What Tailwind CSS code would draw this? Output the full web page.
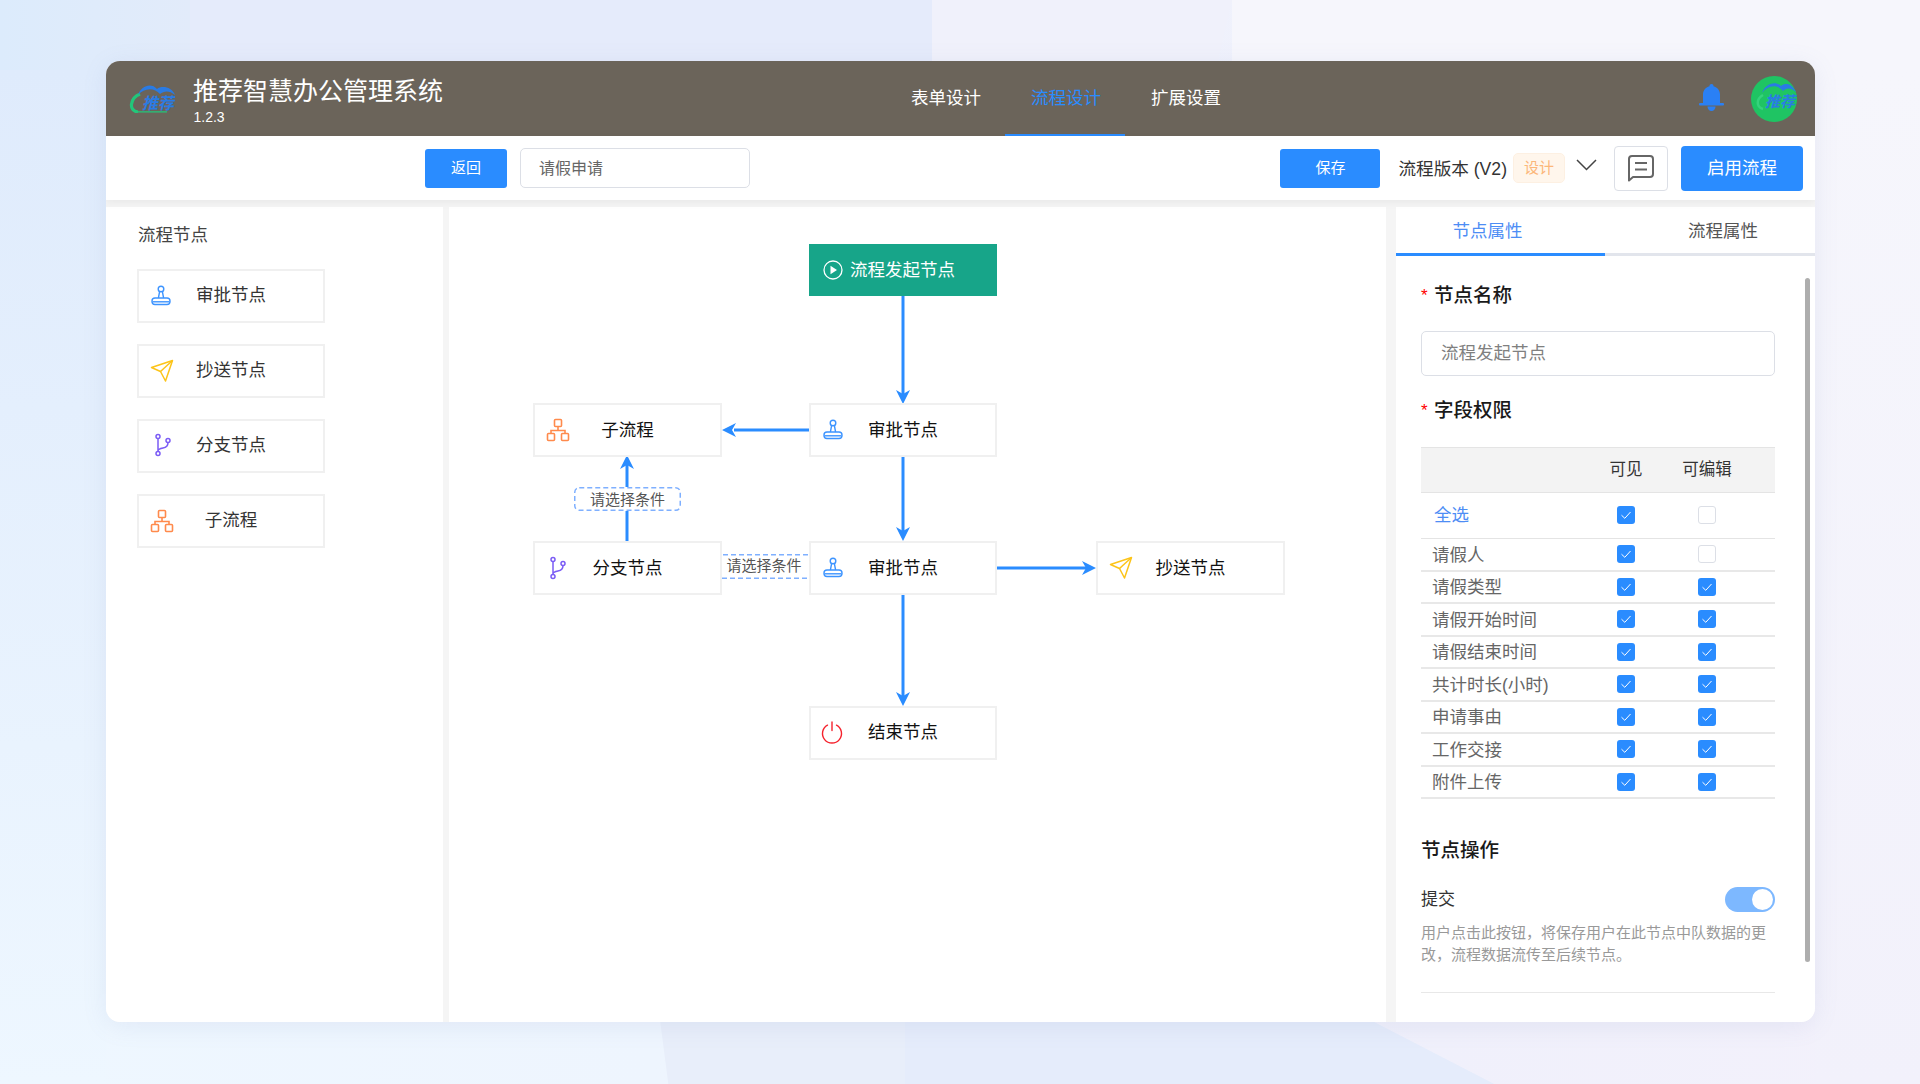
<!DOCTYPE html>
<html lang="zh-CN">
<head>
    <meta charset="UTF-8">
    <title>推荐智慧办公管理系统 - 流程设计</title>
    <meta name="viewport" content="width=device-width, initial-scale=1">
    <script src="https://cdn.jsdelivr.net/npm/@tailwindcss/browser@4"></script>
</head>
<body class="relative w-[1920px] h-[1084px] overflow-hidden bg-[linear-gradient(90deg,#eef7ff_0%,#eef5fe_34%,#f0f0fb_75%,#f3f1fb_100%)] font-['Liberation_Sans','Noto_Sans_CJK_SC',sans-serif]">

    <!-- icons -->
    <svg class="hidden">
        <symbol id="i-stamp" viewBox="0 0 24 24" fill="none" stroke="currentColor" stroke-width="1.4">
            <circle cx="12" cy="5" r="2.8"/>
            <path d="M10.6 7.6 9.4 14M13.4 7.6l1.200 6.400"/>
            <rect x="3" y="14" width="18" height="6.500" rx="3"/>
            <path d="M3.500 17.800h17"/>
        </symbol>
        <symbol id="i-send" viewBox="0 0 24 24" fill="none" stroke="currentColor" stroke-width="1.5" stroke-linejoin="round">
            <path d="M1.500 9.500 22.500 2.500 15.500 23 10.500 13.500Z"/>
            <path d="M22.500 2.500 10.500 13.500"/>
        </symbol>
        <symbol id="i-branch" viewBox="0 0 24 24" fill="none" stroke="currentColor" stroke-width="1.500">
            <circle cx="7" cy="3.500" r="2"/>
            <circle cx="7" cy="20.500" r="2"/>
            <circle cx="17" cy="7.500" r="2"/>
            <path d="M7 5.500v13M17 9.500c0 4-2 5-5 5.500-3 .5-5 1-5 3"/>
        </symbol>
        <symbol id="i-org" viewBox="0 0 24 24" fill="none" stroke="currentColor" stroke-width="1.6">
            <rect x="8.500" y="1.500" width="7" height="7" rx="1"/>
            <rect x="1.500" y="15.500" width="7" height="7" rx="1"/>
            <rect x="15.500" y="15.500" width="7" height="7" rx="1"/>
            <path d="M12 8.500v4M5 15.500v-3h14v3"/>
        </symbol>
        <symbol id="i-power" viewBox="0 0 24 24" fill="none" stroke="currentColor" stroke-width="1.4" stroke-linecap="round">
            <path d="M7.500 5.200a9.500 9.500 0 1 0 9 0"/>
            <path d="M12 2v8.500"/>
        </symbol>
        <symbol id="i-check" viewBox="0 0 18 18" fill="none" stroke="#fff" stroke-width="1">
            <path d="M4.500 9.200 7.800 12.300 13.500 6"/>
        </symbol>
    </svg>

    <!-- background panels -->
    <div class="absolute left-0 top-0 w-[1232px] h-[70px] bg-[#f0f1fb] [clip-path:polygon(0_0,100%_0,98.700%_100%,0_100%)]"></div>
    <div class="absolute left-0 top-0 w-[932px] h-[70px] bg-[#e5ebfb]"></div>
    <div class="absolute left-0 top-0 w-[190px] h-[70px] bg-[linear-gradient(90deg,#dcebfc,#e2ebfa)]"></div>
    <div class="absolute left-[1232px] top-0 right-0 h-[70px] bg-[#f6f6fc]"></div>
    <div class="absolute left-0 top-[70px] w-[106px] h-[1014px] bg-[linear-gradient(180deg,#dfebfc,#eef7ff)]"></div>
    <div class="absolute right-0 top-[70px] w-[105px] h-[1014px] bg-[linear-gradient(180deg,#f6f6fc,#f2f1fb)]"></div>
    <div class="absolute left-[660px] top-[1020px] w-[834px] h-[64px] bg-[#e8eefa] [clip-path:polygon(0_0,85%_0,100%_100%,1%_100%)]"></div>
    <div class="absolute left-[905px] top-[1020px] w-[589px] h-[64px] bg-[#e5ecfb] [clip-path:polygon(0_0,79%_0,100%_100%,0_100%)]"></div>

    <!-- app window -->
    <div class="absolute left-[106px] top-[61px] w-[1709px] h-[961px] flex flex-col rounded-[14px] overflow-hidden bg-[#f5f5f5] shadow-[0_4px_24px_rgba(120,140,190,0.12)]">

        <!-- header -->
        <header class="h-[75px] shrink-0 flex items-center bg-[#6b645a] text-white">
            <div class="w-[779px] shrink-0 flex items-center">
                <svg class="ml-[23px] w-[46px] h-[29px]" viewBox="0 0 46 29" fill="none">
                    <path d="M11 10C1 14-1 27 9 28" stroke="#22c77a" stroke-width="3.200"/>
                    <path d="M9 27.800H38" stroke="#22c77a" stroke-width="1.200"/>
                    <path d="M9 11C12 2 22-2 28 5 33 1 43 3 46 11 40 6 35 7 31 10 25 3 15 4 9 11Z" fill="#2a7be4"/>
                    <text x="13" y="25" font-size="16" font-weight="700" font-style="italic" fill="#2a7be4">推荐</text>
                </svg>
                <div class="ml-[18px] flex flex-col">
                    <span class="text-[25px] leading-[32px] mt-[4px]">推荐智慧办公管理系统</span>
                    <span class="text-[14px] leading-[18px] mt-[1px] ml-[0.5px]">1.2.3</span>
                </div>
            </div>
            <nav class="flex h-full text-[17.5px]">
                <div class="w-[120px] flex items-center justify-center pl-[2px]">表单设计</div>
                <div class="w-[120px] flex items-center justify-center pl-[2px] pt-[2px] text-[#2a8cff] border-b-2 border-[#2a8cff]">流程设计</div>
                <div class="w-[120px] flex items-center justify-center pl-[2px]">扩展设置</div>
            </nav>
            <div class="flex-1"></div>
            <svg class="w-[25px] h-[27px] mr-[27px] mb-[2px]" viewBox="0 0 25 27" fill="#2a80f5">
                <path d="M12.500 0a2 2 0 0 1 2 2.200c4 1 6.500 4.400 6.500 8.300V19H4v-8.500c0-3.900 2.500-7.300 6.500-8.300a2 2 0 0 1 2-2.200Z"/>
                <rect x="0" y="19" width="25" height="2.400" rx="1"/>
                <path d="M8.500 22.500h8c0 2.500-1.800 4.500-4 4.500s-4-2-4-4.500Z"/>
            </svg>
            <svg class="w-[46px] h-[46px] mr-[18px]" viewBox="0 0 46 46" fill="none">
                <circle cx="23" cy="23" r="23" fill="#1fc463"/>
                <path d="M12 19C5 23 5 31 12 33" stroke="#35d27c" stroke-width="2.500"/>
                <path d="M11 17C14 8 24 4 30 10 35 6 41 8 45 16 39 11 35 12 32 15 26 8 17 9 11 17Z" fill="#2a7be4"/>
                <text x="14" y="31" font-size="15" font-weight="700" font-style="italic" fill="#2a7be4">推荐</text>
            </svg>
        </header>

        <!-- toolbar -->
        <div class="relative z-10 h-[64px] shrink-0 flex items-center bg-white shadow-[0_3px_8px_rgba(0,0,0,0.05)]">
            <button type="button" class="ml-[319px] w-[82px] h-[39px] rounded-[3px] bg-[#2a8cff] text-white text-[15px]">返回</button>
            <div class="ml-[13px] w-[230px] h-[40px] flex items-center pl-[18px] pt-[1px] rounded-[5px] border border-[#dcdfe6] bg-white text-[16px] text-[#666]">请假申请</div>
            <div class="flex-1"></div>
            <button type="button" class="w-[100px] h-[39px] rounded-[3px] bg-[#2a8cff] text-white text-[15px]">保存</button>
            <span class="ml-[18px] pt-[2px] text-[17.6px] text-[#333]">流程版本 (V2)</span>
            <span class="ml-[6px] w-[52px] h-[30px] flex items-center justify-center rounded-[5px] bg-[#fff6ec] border border-[#fdf0e2] text-[15px] text-[#fcb77a]">设计</span>
            <svg class="ml-[11px] mb-[6px] w-[21px] h-[12px]" viewBox="0 0 21 12" fill="none" stroke="#444" stroke-width="1.500"><path d="M1 1l9.500 9.500L20 1"/></svg>
            <div class="ml-[17px] w-[54px] h-[45px] flex items-center justify-center rounded-[4px] border border-[#dcdfe6] bg-white">
                <svg class="w-[28px] h-[28px]" viewBox="0 0 28 28" fill="none" stroke="#666" stroke-width="2">
                    <path d="M2 5a3 3 0 0 1 3-3h18a3 3 0 0 1 3 3v15a3 3 0 0 1-3 3H6l-4 3.500Z" stroke-linejoin="round"/>
                    <path d="M8 9h12M8 15.500h12"/>
                </svg>
            </div>
            <button type="button" class="ml-[13px] mr-[12px] w-[122px] h-[45px] rounded-[4px] bg-[#2a8cff] text-white text-[17.5px]">启用流程</button>
        </div>

        <!-- body -->
        <div class="flex-1 min-h-0 flex pt-[7px]">

            <!-- node palette -->
            <aside class="w-[337px] shrink-0 bg-white px-[31px]">
                <h2 class="mt-[16px] ml-[1px] text-[17.5px] leading-[24px] font-normal text-[#444]">流程节点</h2>
                <div class="mt-[22px] flex flex-col gap-[21px]">
                    <div class="relative w-[188px] h-[54px] flex items-center justify-center pb-[2px] border-2 border-[#f0f0f0] text-[17.5px] text-[#333]">
                        <svg class="absolute left-[10px] top-[13px] w-[24px] h-[24px] text-[#3d94ff]"><use href="#i-stamp"/></svg>审批节点
                    </div>
                    <div class="relative w-[188px] h-[54px] flex items-center justify-center pb-[2px] border-2 border-[#f0f0f0] text-[17.5px] text-[#333]">
                        <svg class="absolute left-[11px] top-[12px] w-[24px] h-[24px] text-[#fcc419]"><use href="#i-send"/></svg>抄送节点
                    </div>
                    <div class="relative w-[188px] h-[54px] flex items-center justify-center pb-[2px] border-2 border-[#f0f0f0] text-[17.5px] text-[#333]">
                        <svg class="absolute left-[12px] top-[12px] w-[24px] h-[24px] text-[#7b5cf5]"><use href="#i-branch"/></svg>分支节点
                    </div>
                    <div class="relative w-[188px] h-[54px] flex items-center justify-center pb-[2px] border-2 border-[#f0f0f0] text-[17.5px] text-[#333]">
                        <svg class="absolute left-[11px] top-[13px] w-[24px] h-[24px] text-[#ff8a4c]"><use href="#i-org"/></svg>子流程
                    </div>
                </div>
            </aside>

            <!-- flow canvas: offsets are relative to page (449, 207) -->
            <main class="relative ml-[6px] w-[937px] shrink-0 bg-white">
                <svg class="absolute left-0 top-0 w-[937px] h-[815px]" viewBox="0 0 937 815" fill="none">
                    <g stroke="#2a8cff" stroke-width="3">
                        <path d="M454 89V190"/>
                        <path d="M454 250V328"/>
                        <path d="M454 387V494"/>
                        <path d="M360 223H285"/>
                        <path d="M548 361H640"/>
                        <path d="M178 334V255"/>
                    </g>
                    <g fill="#2a8cff">
                        <path d="M454 197 447 183 454 187 461 183Z"/>
                        <path d="M454 334 447 320 454 324 461 320Z"/>
                        <path d="M454 499 447 485 454 489 461 485Z"/>
                        <path d="M273 223 287 216 283 223 287 230Z"/>
                        <path d="M647 361 633 354 637 361 633 368Z"/>
                        <path d="M178 248 171 262 178 258 185 262Z"/>
                    </g>
                </svg>

                <!-- start node -->
                <div class="absolute left-[360px] top-[37px] w-[188px] h-[52px] flex items-center bg-[#17a589] text-white text-[17.5px] pl-[14px]">
                    <svg class="w-[20px] h-[20px] mr-[7px]" viewBox="0 0 20 20" fill="none"><circle cx="10" cy="10" r="9" stroke="#fff" stroke-width="1.300"/><path d="M7.500 5.800v8.400L14 10Z" fill="#fff"/></svg>流程发起节点
                </div>

                <div class="absolute left-[360px] top-[196px] w-[188px] h-[54px] flex items-center justify-center bg-white border-2 border-[#f0f0f0] text-[17.5px] text-[#111]">
                    <svg class="absolute left-[10px] top-[13px] w-[24px] h-[24px] text-[#3d94ff]"><use href="#i-stamp"/></svg>审批节点
                </div>
                <div class="absolute left-[84px] top-[196px] w-[189px] h-[54px] flex items-center justify-center bg-white border-2 border-[#f0f0f0] text-[17.5px] text-[#111]">
                    <svg class="absolute left-[11px] top-[13px] w-[24px] h-[24px] text-[#ff8a4c]"><use href="#i-org"/></svg>子流程
                </div>

                <!-- condition on the branch going up -->
                <div class="absolute left-[125px] top-[280px] w-[107px] h-[24px] bg-white rounded-[5px]"></div>
                <svg class="absolute left-[125px] top-[280px] w-[107px] h-[24px]" viewBox="0 0 107 24" fill="none"><rect x="0.750" y="0.750" width="105.500" height="22.500" rx="4.500" stroke="#7fb0ff" stroke-width="1.500" stroke-dasharray="5 3"/></svg>
                <div class="absolute left-[125px] top-[281px] w-[107px] h-[24px] flex items-center justify-center text-[15px] text-[#555]">请选择条件</div>

                <div class="absolute left-[84px] top-[334px] w-[189px] h-[54px] flex items-center justify-center bg-white border-2 border-[#f0f0f0] text-[17.5px] text-[#111]">
                    <svg class="absolute left-[11px] top-[13px] w-[24px] h-[24px] text-[#7b5cf5]"><use href="#i-branch"/></svg>分支节点
                </div>

                <!-- condition on the branch going right -->
                <svg class="absolute left-[273px] top-[347px] w-[87px] h-[25px]" viewBox="0 0 87 25" fill="none"><path d="M1 0.750H87M0 24.250H87" stroke="#7fb0ff" stroke-width="1.500" stroke-dasharray="5 3"/></svg>
                <div class="absolute left-[273px] top-[347px] w-[87px] h-[25px] flex items-center justify-center pr-[3px] text-[15px] text-[#555]">请选择条件</div>

                <div class="absolute left-[360px] top-[334px] w-[188px] h-[54px] flex items-center justify-center bg-white border-2 border-[#f0f0f0] text-[17.5px] text-[#111]">
                    <svg class="absolute left-[10px] top-[13px] w-[24px] h-[24px] text-[#3d94ff]"><use href="#i-stamp"/></svg>审批节点
                </div>
                <div class="absolute left-[647px] top-[334px] w-[189px] h-[54px] flex items-center justify-center bg-white border-2 border-[#f0f0f0] text-[17.5px] text-[#111]">
                    <svg class="absolute left-[11px] top-[12px] w-[24px] h-[24px] text-[#fcc419]"><use href="#i-send"/></svg>抄送节点
                </div>
                <div class="absolute left-[360px] top-[499px] w-[188px] h-[54px] flex items-center justify-center pb-[2px] bg-white border-2 border-[#f0f0f0] text-[17.5px] text-[#111]">
                    <svg class="absolute left-[9px] top-[12px] w-[24px] h-[24px] text-[#f5222d]"><use href="#i-power"/></svg>结束节点
                </div>
            </main>

            <!-- property panel -->
            <aside class="relative ml-[10px] flex-1 min-w-0 bg-white">
                <div class="flex h-[49px] text-[17.5px]">
                    <div class="w-[209px] flex items-center justify-center pr-[26px] pt-[2px] border-b-[3px] border-[#2a8cff] text-[#4d8df5]">节点属性</div>
                    <div class="flex-1 flex items-center justify-center pl-[26px] pt-[2px] border-b-[3px] border-[#e2e5ec] text-[#555]">流程属性</div>
                </div>

                <!-- scrollbar -->
                <div class="absolute left-[409px] top-[71px] w-[5px] h-[684px] rounded-full bg-[#aeaeae]"></div>

                <div class="w-[354px] ml-[25px]">
                    <div class="mt-[26px] flex items-center h-[28px] text-[19.5px] font-medium text-[#1a1a1a]"><span class="w-[13px] text-[#f00] text-[17px]">*</span>节点名称</div>
                    <div class="mt-[21px] h-[45px] flex items-center pl-[19px] rounded-[5px] border border-[#dcdfe6] text-[17.5px] text-[#808080]">流程发起节点</div>
                    <div class="mt-[21px] flex items-center h-[28px] text-[19.5px] font-medium text-[#1a1a1a]"><span class="w-[13px] text-[#f00] text-[17px]">*</span>字段权限</div>

                    <div class="mt-[22px] text-[17.5px] text-[#666]">
                        <div class="grid grid-cols-[160px_90px_72px_32px] items-center h-[46px] pb-[2px] bg-[#f3f3f3] border-y border-[#e4e4e4] text-[#333] text-center text-[16.5px]">
                            <span></span><span>可见</span><span>可编辑</span><span></span>
                        </div>
                        <div class="grid grid-cols-[160px_90px_72px_32px] items-center h-[46px] border-b border-[#e4e4e4]">
                            <span class="pl-[13px] text-[#4d8df5]">全选</span>
                            <span class="justify-self-center mb-[2px] w-[18px] h-[18px] rounded-[3px] bg-[#2a8cff]"><svg class="w-[18px] h-[18px]"><use href="#i-check"/></svg></span>
                            <span class="justify-self-center mb-[2px] w-[18px] h-[18px] rounded-[3px] border border-[#dcdfe6]"></span>
                        </div>
                        <div class="grid grid-cols-[160px_90px_72px_32px] items-center h-[32.5px] border-b-2 border-[#e8e8e8]">
                            <span class="pl-[11px] pt-[1px]">请假人</span>
                            <span class="justify-self-center w-[18px] h-[18px] rounded-[3px] bg-[#2a8cff]"><svg class="w-[18px] h-[18px]"><use href="#i-check"/></svg></span>
                            <span class="justify-self-center w-[18px] h-[18px] rounded-[3px] border border-[#dcdfe6]"></span>
                        </div>
                        <div class="grid grid-cols-[160px_90px_72px_32px] items-center h-[32.5px] border-b-2 border-[#e8e8e8]">
                            <span class="pl-[11px] pt-[1px]">请假类型</span>
                            <span class="justify-self-center w-[18px] h-[18px] rounded-[3px] bg-[#2a8cff]"><svg class="w-[18px] h-[18px]"><use href="#i-check"/></svg></span>
                            <span class="justify-self-center w-[18px] h-[18px] rounded-[3px] bg-[#2a8cff]"><svg class="w-[18px] h-[18px]"><use href="#i-check"/></svg></span>
                        </div>
                        <div class="grid grid-cols-[160px_90px_72px_32px] items-center h-[32.5px] border-b-2 border-[#e8e8e8]">
                            <span class="pl-[11px] pt-[1px]">请假开始时间</span>
                            <span class="justify-self-center w-[18px] h-[18px] rounded-[3px] bg-[#2a8cff]"><svg class="w-[18px] h-[18px]"><use href="#i-check"/></svg></span>
                            <span class="justify-self-center w-[18px] h-[18px] rounded-[3px] bg-[#2a8cff]"><svg class="w-[18px] h-[18px]"><use href="#i-check"/></svg></span>
                        </div>
                        <div class="grid grid-cols-[160px_90px_72px_32px] items-center h-[32.5px] border-b-2 border-[#e8e8e8]">
                            <span class="pl-[11px] pt-[1px]">请假结束时间</span>
                            <span class="justify-self-center w-[18px] h-[18px] rounded-[3px] bg-[#2a8cff]"><svg class="w-[18px] h-[18px]"><use href="#i-check"/></svg></span>
                            <span class="justify-self-center w-[18px] h-[18px] rounded-[3px] bg-[#2a8cff]"><svg class="w-[18px] h-[18px]"><use href="#i-check"/></svg></span>
                        </div>
                        <div class="grid grid-cols-[160px_90px_72px_32px] items-center h-[32.5px] border-b-2 border-[#e8e8e8]">
                            <span class="pl-[11px] pt-[1px]">共计时长(小时)</span>
                            <span class="justify-self-center w-[18px] h-[18px] rounded-[3px] bg-[#2a8cff]"><svg class="w-[18px] h-[18px]"><use href="#i-check"/></svg></span>
                            <span class="justify-self-center w-[18px] h-[18px] rounded-[3px] bg-[#2a8cff]"><svg class="w-[18px] h-[18px]"><use href="#i-check"/></svg></span>
                        </div>
                        <div class="grid grid-cols-[160px_90px_72px_32px] items-center h-[32.5px] border-b-2 border-[#e8e8e8]">
                            <span class="pl-[11px] pt-[1px]">申请事由</span>
                            <span class="justify-self-center w-[18px] h-[18px] rounded-[3px] bg-[#2a8cff]"><svg class="w-[18px] h-[18px]"><use href="#i-check"/></svg></span>
                            <span class="justify-self-center w-[18px] h-[18px] rounded-[3px] bg-[#2a8cff]"><svg class="w-[18px] h-[18px]"><use href="#i-check"/></svg></span>
                        </div>
                        <div class="grid grid-cols-[160px_90px_72px_32px] items-center h-[32.5px] border-b-2 border-[#e8e8e8]">
                            <span class="pl-[11px] pt-[1px]">工作交接</span>
                            <span class="justify-self-center w-[18px] h-[18px] rounded-[3px] bg-[#2a8cff]"><svg class="w-[18px] h-[18px]"><use href="#i-check"/></svg></span>
                            <span class="justify-self-center w-[18px] h-[18px] rounded-[3px] bg-[#2a8cff]"><svg class="w-[18px] h-[18px]"><use href="#i-check"/></svg></span>
                        </div>
                        <div class="grid grid-cols-[160px_90px_72px_32px] items-center h-[32.5px] border-b-2 border-[#e8e8e8]">
                            <span class="pl-[11px] pt-[1px]">附件上传</span>
                            <span class="justify-self-center w-[18px] h-[18px] rounded-[3px] bg-[#2a8cff]"><svg class="w-[18px] h-[18px]"><use href="#i-check"/></svg></span>
                            <span class="justify-self-center w-[18px] h-[18px] rounded-[3px] bg-[#2a8cff]"><svg class="w-[18px] h-[18px]"><use href="#i-check"/></svg></span>
                        </div>
                    </div>

                    <h3 class="mt-[37px] h-[28px] leading-[28px] text-[19.5px] font-medium text-[#1a1a1a]">节点操作</h3>
                    <div class="mt-[23px] flex items-center justify-between h-[25px]">
                        <span class="text-[17px] text-[#333]">提交</span>
                        <span class="relative w-[50px] h-[25px] rounded-full bg-[#7db8ff]"><span class="absolute right-[2px] top-[2px] w-[21px] h-[21px] rounded-full bg-white"></span></span>
                    </div>
                    <p class="mt-[10px] text-[15px] leading-[22px] text-[#999]">用户点击此按钮，将保存用户在此节点中队数据的更改，流程数据流传至后续节点。</p>
                    <div class="mt-[26px] border-b border-[#e8e8e8]"></div>
                </div>
            </aside>
        </div>
    </div>
</body>
</html>
